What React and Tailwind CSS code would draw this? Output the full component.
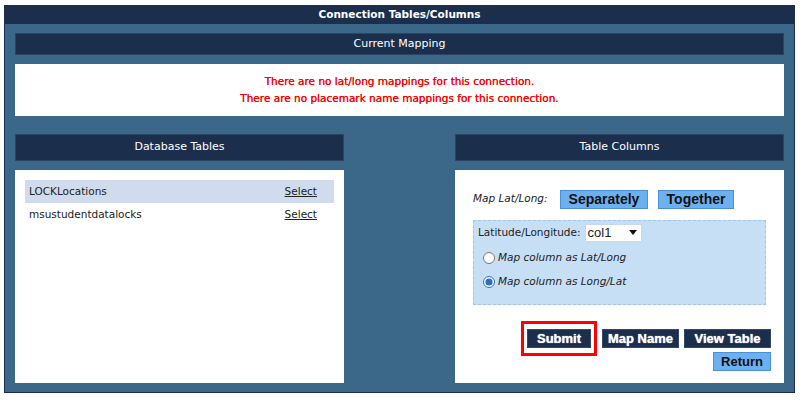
import { useState } from "react";

const font = { fontFamily: '"DejaVu Sans", Verdana, sans-serif' };

function Bar({ title, h = "h-[27px]" }) {
  return (
    <div className={`${h} bg-[#1b2f4c] border border-[#2a4464] flex items-center justify-center text-white text-[11px]`}>
      {title}
    </div>
  );
}

function DarkButton({ children, className = "" }) {
  return (
    <button
      className={`h-[19px] bg-[#1b2f4c] border border-[#2f4a6c] text-white font-bold text-[13px] leading-none [font-family:'Liberation_Sans',Arial,sans-serif] [text-shadow:0_0_1px_#fff] ${className}`}
    >
      {children}
    </button>
  );
}

function LightButton({ children, className = "" }) {
  return (
    <button
      className={`h-[19px] bg-[#6cb0f0] border border-[#4a90d9] text-[#111] font-bold leading-none [font-family:'Liberation_Sans',Arial,sans-serif] ${className}`}
    >
      {children}
    </button>
  );
}

export default function App() {
  const [order, setOrder] = useState("longlat");
  const tables = ["LOCKLocations", "msustudentdatalocks"];

  return (
    <div className="w-[800px] h-[400px] bg-white pt-[5px] pl-[4px]" style={font}>
      <div className="w-[791px]">
        <div className="h-[19px] bg-[#1b2f4c] flex items-center justify-center text-white font-bold text-[10.5px]">
          Connection Tables/Columns
        </div>
        <div className="bg-[#3b6789] border border-[#1b2f4c] border-t-0 px-[10px] pt-[9px] pb-[9px]">
          <Bar title="Current Mapping" h="h-[22px]" />
          <div className="mt-[9px] h-[52px] bg-white flex flex-col items-center justify-center text-[#ff0000] text-[10.5px] leading-[17px] [text-shadow:0_0_0.4px_#ff0000]">
            <div>There are no lat/long mappings for this connection.</div>
            <div>There are no placemark name mappings for this connection.</div>
          </div>

          <div className="mt-[18px] flex justify-between">
            {/* Database Tables */}
            <div className="w-[329px]">
              <Bar title="Database Tables" />
              <div className="mt-[9px] h-[213px] bg-white px-[10px] pt-[10px]">
                {tables.map((t, i) => (
                  <div
                    key={t}
                    className={`h-[23px] flex items-center justify-between pl-[4px] pr-[17px] text-[10.5px] text-[#222] ${i === 0 ? "bg-[#d0dcee]" : ""}`}
                  >
                    <span>{t}</span>
                    <a href="#" className="underline text-[#222]">Select</a>
                  </div>
                ))}
              </div>
            </div>

            {/* Table Columns */}
            <div className="w-[329px]">
              <Bar title="Table Columns" />
              <div className="mt-[9px] h-[213px] bg-white pl-[18px] pr-[13px] pt-[19px] text-[10.5px] text-[#222]">
                <div className="flex items-center h-[20px]">
                  <span className="italic w-[87px]">Map Lat/Long:</span>
                  <LightButton className="w-[88px] text-[14px]">Separately</LightButton>
                  <LightButton className="ml-[10px] w-[76px] text-[14px]">Together</LightButton>
                </div>
                <div className="mt-[11px] mr-[5px] h-[85px] bg-[#c6dff5] border border-dashed border-[#9fc6ee] pl-[4px] pt-[2px]">
                  <div className="flex items-center h-[19px]">
                    <span>Latitude/Longitude:</span>
                    <div className="ml-[4px] w-[57px] h-[18px] bg-white border border-[#c8d8e8] flex items-center justify-between px-[2px] text-[13px] [font-family:'Liberation_Sans',Arial,sans-serif]">
                      <span>col1</span>
                      <svg width="8" height="5" viewBox="0 0 8 5" className="mr-[2px]">
                        <path d="M0 0h8L4 5z" fill="#111" />
                      </svg>
                    </div>
                  </div>
                  <label className="mt-[8px] flex items-center gap-[3px] pl-[5px] italic">
                    <input
                      type="radio"
                      name="order"
                      checked={order === "latlong"}
                      onChange={() => setOrder("latlong")}
                      className="w-[12px] h-[12px] m-0 accent-[#2a6fc9]"
                    />
                    Map column as Lat/Long
                  </label>
                  <label className="mt-[8px] flex items-center gap-[3px] pl-[5px] italic">
                    <input
                      type="radio"
                      name="order"
                      checked={order === "longlat"}
                      onChange={() => setOrder("longlat")}
                      className="w-[12px] h-[12px] m-0 accent-[#2a6fc9]"
                    />
                    Map column as Long/Lat
                  </label>
                </div>

                <div className="mt-[16px] flex justify-end items-center gap-[5px]">
                  <div className="border-[3px] border-[#ff0000] px-[3px] py-[5px] flex">
                    <DarkButton className="w-[64px]">Submit</DarkButton>
                  </div>
                  <DarkButton className="w-[77px]">Map Name</DarkButton>
                  <DarkButton className="w-[87px]">View Table</DarkButton>
                </div>
                <div className="mt-[-4px] flex justify-end">
                  <LightButton className="w-[58px] text-[13px]">Return</LightButton>
                </div>
              </div>
            </div>
          </div>
        </div>
      </div>
    </div>
  );
}
